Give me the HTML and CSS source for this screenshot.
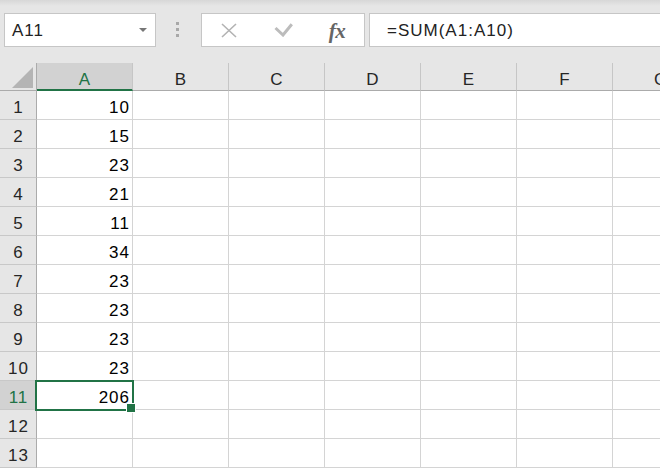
FILE: index.html
```html
<!DOCTYPE html>
<html>
<head>
<meta charset="utf-8">
<link rel="stylesheet" href="styles.css">
</head>
<body>
<div class="app">
  <div class="toolbar">
    <div class="namebox"><span class="ref">A11</span><span class="caret"></span></div>
    <div class="grip"><i></i><i></i><i></i></div>
    <div class="fxbox">
      <span class="fxbtn"><svg width="16" height="15" viewBox="0 0 16 15"><path d="M1 1 L15 14 M15 1 L1 14" stroke="#b3b3b3" stroke-width="1.6" fill="none"/></svg></span>
      <span class="fxbtn"><svg width="19" height="14" viewBox="0 0 19 14"><path d="M1.5 5 L9 12 L17.8 1.2" fill="none" stroke="#bcbcbc" stroke-width="3"/></svg></span>
      <span class="fxbtn fx">fx</span>
    </div>
    <div class="formula">=SUM(A1:A10)</div>
  </div>
  <div class="sheet">
    <div class="corner"><span class="tri"></span></div>
    <div class="ch sel">A</div><div class="ch">B</div><div class="ch">C</div><div class="ch">D</div><div class="ch">E</div><div class="ch">F</div><div class="ch">G</div>

    <div class="rh">1</div><div class="c">10</div><div class="c"></div><div class="c"></div><div class="c"></div><div class="c"></div><div class="c"></div><div class="c"></div>
    <div class="rh">2</div><div class="c">15</div><div class="c"></div><div class="c"></div><div class="c"></div><div class="c"></div><div class="c"></div><div class="c"></div>
    <div class="rh">3</div><div class="c">23</div><div class="c"></div><div class="c"></div><div class="c"></div><div class="c"></div><div class="c"></div><div class="c"></div>
    <div class="rh">4</div><div class="c">21</div><div class="c"></div><div class="c"></div><div class="c"></div><div class="c"></div><div class="c"></div><div class="c"></div>
    <div class="rh">5</div><div class="c">11</div><div class="c"></div><div class="c"></div><div class="c"></div><div class="c"></div><div class="c"></div><div class="c"></div>
    <div class="rh">6</div><div class="c">34</div><div class="c"></div><div class="c"></div><div class="c"></div><div class="c"></div><div class="c"></div><div class="c"></div>
    <div class="rh">7</div><div class="c">23</div><div class="c"></div><div class="c"></div><div class="c"></div><div class="c"></div><div class="c"></div><div class="c"></div>
    <div class="rh">8</div><div class="c">23</div><div class="c"></div><div class="c"></div><div class="c"></div><div class="c"></div><div class="c"></div><div class="c"></div>
    <div class="rh">9</div><div class="c">23</div><div class="c"></div><div class="c"></div><div class="c"></div><div class="c"></div><div class="c"></div><div class="c"></div>
    <div class="rh">10</div><div class="c">23</div><div class="c"></div><div class="c"></div><div class="c"></div><div class="c"></div><div class="c"></div><div class="c"></div>
    <div class="rh sel">11</div><div class="c active">206</div><div class="c"></div><div class="c"></div><div class="c"></div><div class="c"></div><div class="c"></div><div class="c"></div>
    <div class="rh">12</div><div class="c"></div><div class="c"></div><div class="c"></div><div class="c"></div><div class="c"></div><div class="c"></div><div class="c"></div>
    <div class="rh">13</div><div class="c"></div><div class="c"></div><div class="c"></div><div class="c"></div><div class="c"></div><div class="c"></div><div class="c"></div>
  </div>
</div>
</body>
</html>
```

FILE: styles.css
```css
* {
  box-sizing: border-box;
  margin: 0;
  padding: 0;
}

body {
  margin: 0;
  background: #ffffff;
  font-family: "Liberation Sans", Arial, sans-serif;
}

.app {
  width: 660px;
  height: 468px;
  overflow: hidden;
}

.toolbar {
  height: 63px;
  display: flex;
  align-items: flex-start;
  padding-top: 13px;
  background: linear-gradient(#d7d7d7 0px, #e6e6e6 6px, #e6e6e6 100%);
}

.namebox {
  flex: none;
  width: 152px;
  height: 34px;
  margin-left: 4px;
  background: #ffffff;
  border: 1px solid #c6c6c6;
  display: flex;
  align-items: center;
  padding: 2px 8px 0 7px;
  font-size: 17px;
  letter-spacing: 1px;
  color: #222222;
}

.ref {
  flex: 1;
}

.caret {
  width: 0;
  height: 0;
  border-left: 4px solid transparent;
  border-right: 4px solid transparent;
  border-top: 4px solid #767676;
  margin-top: -2px;
}

.grip {
  flex: none;
  margin-left: 20px;
  padding-top: 9px;
  display: flex;
  flex-direction: column;
  gap: 3px;
}

.grip i {
  display: block;
  width: 3px;
  height: 3px;
  background: #a8a8a8;
}

.fxbox {
  flex: none;
  margin-left: 22px;
  width: 164px;
  height: 34px;
  background: #ffffff;
  border: 1px solid #c6c6c6;
  display: flex;
}

.fxbtn {
  width: 54px;
  display: flex;
  align-items: center;
  justify-content: center;
}

.fx {
  font-family: "Liberation Serif", "Times New Roman", serif;
  font-style: italic;
  font-weight: bold;
  font-size: 21px;
  color: #666666;
  padding-top: 2px;
  letter-spacing: -0.5px;
}

.formula {
  flex: 1;
  margin-left: 4px;
  height: 34px;
  background: #ffffff;
  border: 1px solid #c6c6c6;
  border-right: none;
  display: flex;
  align-items: center;
  padding: 2px 0 0 17px;
  font-size: 17px;
  letter-spacing: 1px;
  color: #222222;
}

.sheet {
  display: grid;
  grid-template-columns: 37px repeat(7, 96px);
  grid-template-rows: 28px repeat(13, 29px);
  width: 709px;
}

.corner {
  background: #e6e6e6;
  border-right: 1px solid #ababab;
  border-bottom: 1px solid #ababab;
  display: flex;
  justify-content: flex-end;
  align-items: flex-end;
  padding: 0 3px 2px 0;
}

.tri {
  width: 21px;
  height: 21px;
  background: #b4b4b4;
  clip-path: polygon(100% 0, 100% 100%, 0 100%);
}

.ch {
  background: #e6e6e6;
  border-right: 1px solid #c6c6c6;
  border-bottom: 1px solid #ababab;
  display: flex;
  align-items: flex-end;
  justify-content: center;
  padding-bottom: 2px;
  font-size: 17px;
  line-height: 17px;
  color: #262626;
}

.ch.sel {
  background: #d2d2d2;
  color: #217346;
  border-bottom: 2px solid #217346;
  padding-bottom: 1px;
}

.rh {
  background: #e6e6e6;
  border-right: 1px solid #ababab;
  border-bottom: 1px solid #c8c8c8;
  display: flex;
  align-items: flex-end;
  justify-content: center;
  padding-bottom: 3px;
  font-size: 17px;
  line-height: 17px;
  letter-spacing: 1px;
  text-indent: 1px;
  color: #262626;
}

.rh.sel {
  background: #d2d2d2;
  color: #217346;
}

.c {
  border-right: 1px solid #d4d4d4;
  border-bottom: 1px solid #d4d4d4;
  display: flex;
  align-items: flex-end;
  justify-content: flex-end;
  padding: 0 2px 3px 0;
  font-size: 17px;
  line-height: 17px;
  letter-spacing: 1px;
  color: #000000;
}

.c.active {
  position: relative;
}

.c.active::after {
  content: "";
  position: absolute;
  top: -1px;
  right: -2px;
  bottom: -2px;
  left: -2px;
  border: 2px solid #217346;
}

.c.active::before {
  content: "";
  position: absolute;
  right: -4px;
  bottom: -4px;
  width: 8px;
  height: 8px;
  background: #217346;
  border: 1px solid #ffffff;
  z-index: 2;
}
```
